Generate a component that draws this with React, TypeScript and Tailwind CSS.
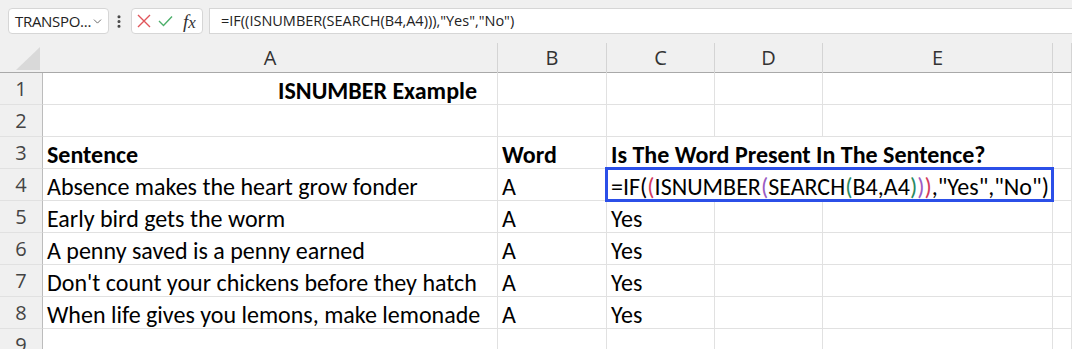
import { ChevronDown, EllipsisVertical } from "lucide-react";

const CELL_FONT = "font-['Carlito','Open_Sans','Noto_Sans',sans-serif]";
const UI_FONT = "font-['Open_Sans','Noto_Sans',sans-serif]";

const COLS = ["A", "B", "C", "D", "E", ""];
const GRID = "grid grid-cols-[43px_455px_109px_108px_108px_230px_1fr]";

const ROWS = [
  { a: "Absence makes the heart grow fonder", b: "A", c: "" },
  { a: "Early bird gets the worm", b: "A", c: "Yes" },
  { a: "A penny saved is a penny earned", b: "A", c: "Yes" },
  { a: "Don't count your chickens before they hatch", b: "A", c: "Yes" },
  { a: "When life gives you lemons, make lemonade", b: "A", c: "Yes" },
];

function RowHead({ n }: { n: number }) {
  return (
    <div
      className={`flex items-center justify-center border-r border-b border-r-[#bcbcbc] border-b-[#e1e1e1] bg-[#f0f0f0] text-[20px] text-[#444] ${UI_FONT}`}
    >
      {n}
    </div>
  );
}

function Cell({
  children,
  bold,
  span,
  className = "",
}: {
  children?: React.ReactNode;
  bold?: boolean;
  span?: boolean;
  className?: string;
}) {
  return (
    <div
      className={[
        "flex items-end whitespace-nowrap border-r border-b border-[#e1e1e1] pb-[1px] pl-[4px] text-[24px] leading-none text-black",
        CELL_FONT,
        bold ? "font-bold" : "",
        span ? "col-span-3" : "",
        className,
      ].join(" ")}
    >
      {children}
    </div>
  );
}

export default function App() {
  return (
    <div className="h-[349px] w-[1072px] overflow-hidden bg-white">
      {/* formula bar */}
      <div className="flex h-[43px] items-start bg-[#f0f0f0] pl-[8px] pt-[8px]">
        <div
          className={`flex h-[26px] w-[101px] items-center justify-between rounded-[4px] border border-[#d6d6d6] bg-white pl-[6px] pr-[4px] text-[15px] text-[#222] ${UI_FONT}`}
        >
          <span className="tracking-[-0.3px]">TRANSPO...</span>
          <ChevronDown size={15} strokeWidth={1.6} className="text-[#555]" />
        </div>
        <div className="ml-[2px] flex h-[26px] w-[16px] items-center justify-center text-[#444]">
          <EllipsisVertical size={17} strokeWidth={2.6} />
        </div>
        <div className="ml-[4px] flex h-[26px] w-[72px] items-center rounded-[4px] border border-[#d6d6d6] bg-white pl-[5px]">
          <svg width="14" height="14" viewBox="0 0 14 14" className="text-[#e0555a]">
            <path d="M1 1 L13 13 M13 1 L1 13" stroke="currentColor" strokeWidth="1.4" fill="none" />
          </svg>
          <svg width="15" height="12" viewBox="0 0 15 12" className="ml-[7px] text-[#4caf6a]">
            <path d="M1 6 L5.5 10.5 L14 1.5" stroke="currentColor" strokeWidth="1.4" fill="none" />
          </svg>
          <span className="ml-[10px] font-['Liberation_Serif',serif] text-[19px] italic leading-none text-[#333]">
            f<span className="text-[17px]">x</span>
          </span>
        </div>
        <div
          className={`ml-[6px] flex h-[26px] flex-1 items-center border-y border-l border-[#d6d6d6] bg-white pl-[11px] text-[14.5px] text-[#222] ${UI_FONT}`}
        >
          =IF((ISNUMBER(SEARCH(B4,A4))),"Yes","No")
        </div>
      </div>

      {/* column headers */}
      <div className={`${GRID} h-[30px] border-b border-[#a9a9a9] bg-[#f0f0f0]`}>
        <div className="flex items-end justify-end pb-[3px] pr-[3px]">
          <div className="h-[23px] w-[24px] bg-[#d9d9d9] [clip-path:polygon(100%_0,100%_100%,0_100%)]" />
        </div>
        {COLS.map((c, i) => (
          <div
            key={i}
            className={`flex items-center justify-center border-r border-[#d4d4d4] text-[20px] text-[#333] ${UI_FONT}`}
          >
            {c}
          </div>
        ))}
      </div>

      {/* body */}
      <div className={`${GRID} auto-rows-[32px]`}>
        <RowHead n={1} />
        <Cell bold className="justify-end pr-[20px]">
          ISNUMBER Example
        </Cell>
        <Cell />
        <Cell />
        <Cell />
        <Cell />
        <Cell />

        <RowHead n={2} />
        <Cell />
        <Cell />
        <Cell />
        <Cell />
        <Cell />
        <Cell />

        <RowHead n={3} />
        <Cell bold>Sentence</Cell>
        <Cell bold>Word</Cell>
        <Cell bold span>
          Is The Word Present In The Sentence?
        </Cell>
        <Cell />

        {ROWS.map((r, i) => (
          <div key={i} className="contents">
            <RowHead n={i + 4} />
            <Cell>{r.a}</Cell>
            <Cell>{r.b}</Cell>
            {i === 0 ? (
              <Cell span className="relative overflow-visible">
                <div className="absolute -inset-[2px] z-10 border-[3px] border-[#2b4fe8]" />
                <span>
                  =IF(<span className="text-[#d23a5e]">(</span>ISNUMBER
                  <span className="text-[#9b5cc4]">(</span>SEARCH
                  <span className="text-[#2a8a62]">(</span>B4,A4
                  <span className="text-[#2a8a62]">)</span>
                  <span className="text-[#9b5cc4]">)</span>
                  <span className="text-[#d23a5e]">)</span>,"Yes","No")
                </span>
              </Cell>
            ) : (
              <>
                <Cell>{r.c}</Cell>
                <Cell />
                <Cell />
              </>
            )}
            <Cell />
          </div>
        ))}

        <RowHead n={9} />
        <Cell />
        <Cell />
        <Cell />
        <Cell />
        <Cell />
        <Cell />
      </div>
    </div>
  );
}
